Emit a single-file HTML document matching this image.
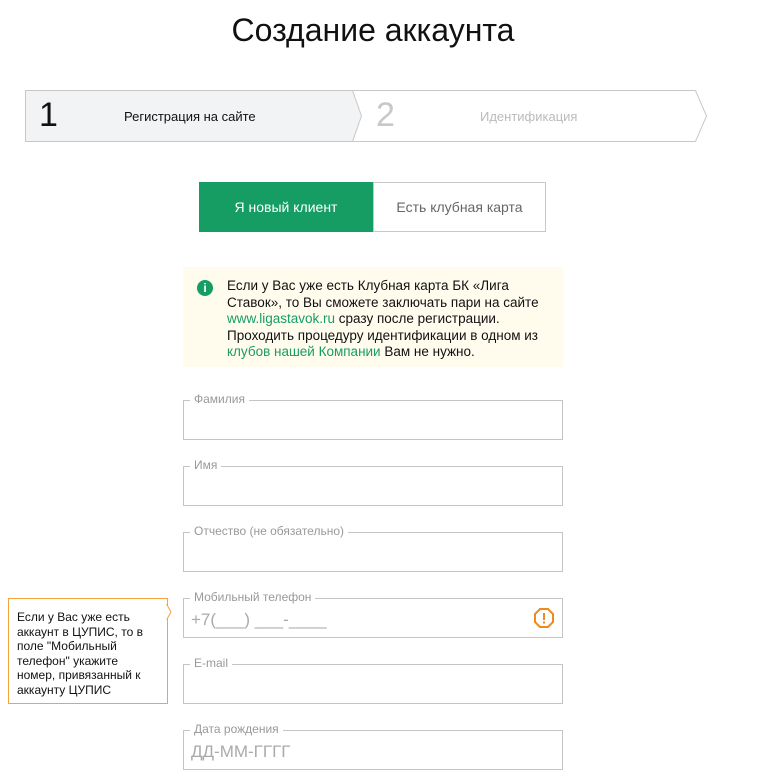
<!DOCTYPE html>
<html><head><meta charset="utf-8"><style>
body{margin:0;width:761px;height:776px;background:#fff;font-family:"Liberation Sans",Arial,sans-serif;position:relative;overflow:hidden}
.a{position:absolute}
.f{position:absolute;left:183px;width:378px;height:38px;border:1px solid #c4c4c4}
.f span{position:absolute;top:-9px;left:6px;background:#fff;padding:0 4px;font-size:12px;color:#999}
.f i{position:absolute;left:7px;top:11px;font-style:normal;font-size:17px;color:#aaa}
</style></head><body>
<div class="a" style="left:0;width:746px;top:12px;text-align:center;font-size:32px;color:#111">Создание аккаунта</div>
<svg class="a" style="left:0;top:0" width="761" height="150">
<polygon points="25.5,90.5 352.5,90.5 361.5,116 352.5,141.5 25.5,141.5" fill="#f1f3f4" stroke="#c8c8c8"/>
<polyline points="352.5,90.5 695.5,90.5 706.5,116 695.5,141.5 352.5,141.5" fill="none" stroke="#c8c8c8"/>
</svg>
<div class="a" style="left:39px;top:96px;font-size:34px;color:#111">1</div>
<div class="a" style="left:124px;top:109px;font-size:13px;color:#111">Регистрация на сайте</div>
<div class="a" style="left:376px;top:96px;font-size:34px;color:#c8c8c8">2</div>
<div class="a" style="left:480px;top:109px;font-size:13px;color:#bbb">Идентификация</div>
<div class="a" style="left:199px;top:182px;width:174px;height:50px;background:#169d63;color:#fff;font-size:14px;line-height:50px;text-align:center">Я новый клиент</div>
<div class="a" style="left:373px;top:182px;width:171px;height:48px;border:1px solid #c8c8c8;color:#666;font-size:14px;line-height:48px;text-align:center">Есть клубная карта</div>
<div class="a" style="left:183px;top:267px;width:380px;height:100px;background:#fffcee"></div>
<div class="a" style="left:197px;top:280px;width:16px;height:16px;border-radius:50%;background:#169d63;color:#fff;font-size:12px;font-weight:bold;text-align:center;line-height:16px">i</div>
<div class="a" style="left:227px;top:278px;width:335px;font-size:13.5px;line-height:16.5px;color:#111">Если у Вас уже есть Клубная карта БК «Лига Ставок», то Вы сможете заключать пари на сайте <span style="color:#169d63">www.ligastavok.ru</span> сразу после регистрации. Проходить процедуру идентификации в одном из <span style="color:#169d63">клубов нашей Компании</span> Вам не нужно.</div>
<div class="f" style="top:400px"><span>Фамилия</span></div>
<div class="f" style="top:466px"><span>Имя</span></div>
<div class="f" style="top:532px"><span>Отчество (не обязательно)</span></div>
<div class="f" style="top:598px"><span>Мобильный телефон</span><i>+7(___) ___-____</i>
<svg class="a" style="right:8px;top:9px" width="20" height="20"><polygon points="6,1 14,1 19,6 19,14 14,19 6,19 1,14 1,6" fill="none" stroke="#f08a1c" stroke-width="2"/><rect x="9" y="5" width="2" height="7" fill="#f08a1c"/><rect x="9" y="13.5" width="2" height="2" fill="#f08a1c"/></svg></div>
<div class="f" style="top:664px"><span>E-mail</span></div>
<div class="f" style="top:730px"><span>Дата рождения</span><i>ДД-ММ-ГГГГ</i></div>
<div class="a" style="left:8px;top:598px;width:158px;height:104px;border:1px solid #f5a33c;background:#fff"></div>
<svg class="a" style="left:160px;top:604px" width="12" height="20"><polyline points="6.5,0 11,8 6.5,16" fill="#fff" stroke="#f5a33c"/><rect x="5" y="1" width="1.6" height="15" fill="#fff"/></svg>
<div class="a" style="left:17px;top:610px;width:134px;font-size:12px;line-height:14.5px;color:#111">Если у Вас уже есть аккаунт в ЦУПИС, то в поле "Мобильный телефон" укажите номер, привязанный к аккаунту ЦУПИС</div>
</body></html>
